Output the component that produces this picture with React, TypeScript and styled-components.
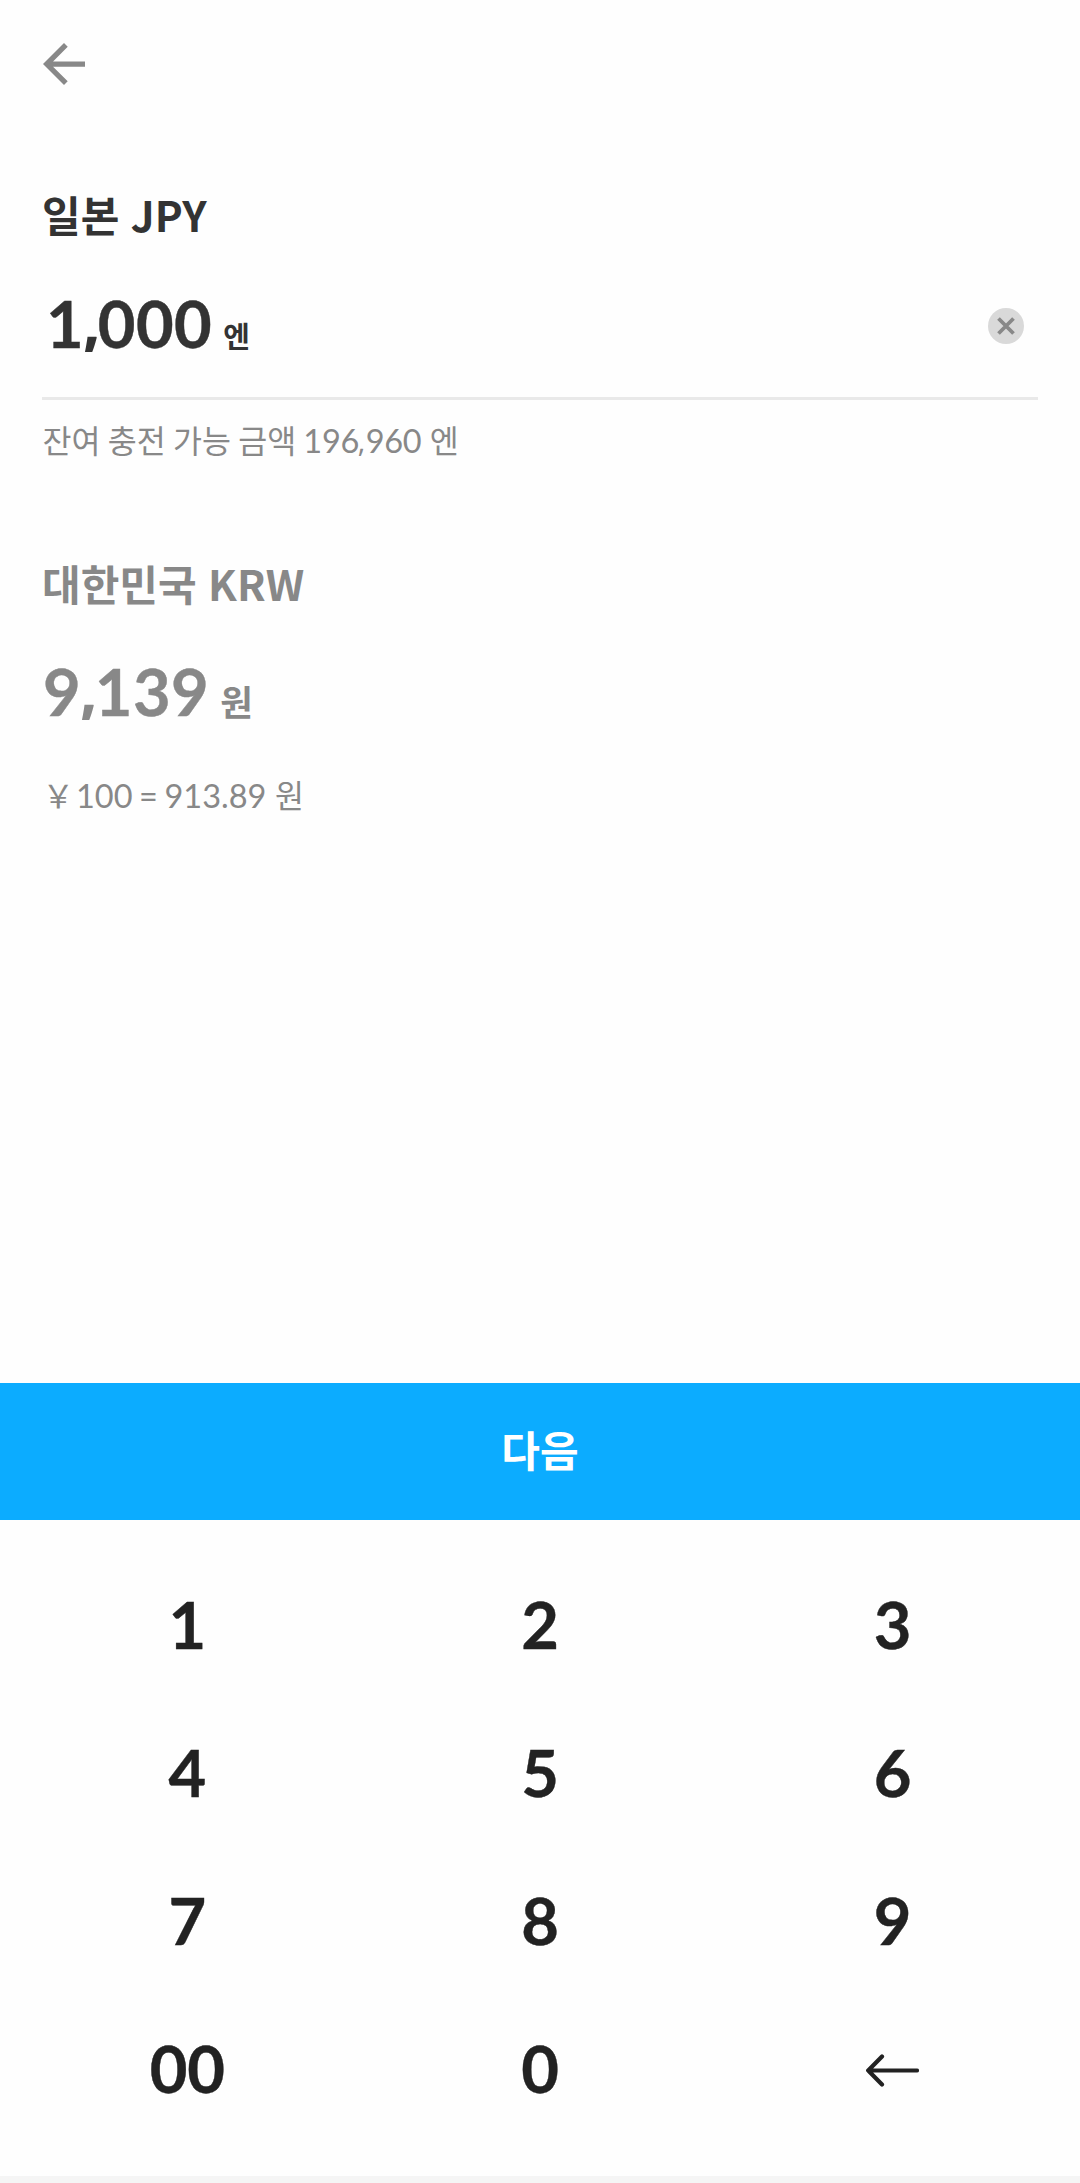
import React from "react";
import styled, { createGlobalStyle } from "styled-components";

const Global = createGlobalStyle`
  * { box-sizing: border-box; }
  body { margin: 0; background: #fefefe; }
`;

const Screen = styled.div`
  width: 1080px;
  height: 2183px;
  display: flex;
  flex-direction: column;
  background: #fefefe;
  font-family: Lato, "Noto Sans CJK KR", sans-serif;
  overflow: hidden;
`;

const Header = styled.header`
  height: 152px;
  flex: none;
  padding: 43px 0 0 43px;
`;

const IconButton = styled.button`
  display: flex;
  padding: 0;
  border: 0;
  background: none;
`;

const ClearButton = styled(IconButton)`
  margin-top: 32px;
`;

const Content = styled.main`
  height: 1231px;
  flex: none;
  padding: 0 42px;
`;

const Title = styled.h2<{ $color: string; $height: number }>`
  margin: 0;
  height: ${(p) => p.$height}px;
  font: 700 42px/${(p) => p.$height}px "Noto Sans CJK KR", sans-serif;
  word-spacing: 2px;
  color: ${(p) => p.$color};
`;

const AmountRow = styled.div`
  height: 124px;
  display: flex;
  align-items: flex-start;
  justify-content: space-between;
  border-bottom: 3px solid #e9e9e9;
  padding-right: 14px;
`;

const Amount = styled.div<{ $color: string; $height: number; $indent: number }>`
  height: ${(p) => p.$height}px;
  line-height: ${(p) => p.$height}px;
  padding-left: ${(p) => p.$indent}px;
  font-size: 65px;
  font-weight: 700;
  letter-spacing: 0.4px;
  color: ${(p) => p.$color};
  -webkit-text-stroke: 0.4px ${(p) => p.$color};
  white-space: nowrap;
`;

const Comma = styled.span`
  font: 800 53px/1 "Open Sans", sans-serif;
  vertical-align: 3px;
  margin: 0 -2.4px 0 -0.7px;
  -webkit-text-stroke: 0;
`;

const SmallComma = styled.span`
  font: 400 29px/1 "Open Sans", sans-serif;
  vertical-align: 1px;
  margin: 0 0.8px 0 -1.3px;
`;

const Unit = styled.span<{ $size: number }>`
  font-size: ${(p) => p.$size}px;
  line-height: 1;
  margin-left: 11px;
  -webkit-text-stroke: 0;
`;

const Note = styled.div<{ $height: number; $spacing: number; $wordSpacing: number }>`
  height: ${(p) => p.$height}px;
  padding-left: 0.5px;
  font-size: 32.5px;
  line-height: ${(p) => p.$height}px;
  letter-spacing: ${(p) => p.$spacing}px;
  word-spacing: ${(p) => p.$wordSpacing}px;
  color: #888;
  white-space: nowrap;
`;

const Hangul = styled.span<{ $before?: number; $after?: number }>`
  font-size: 31.5px;
  line-height: 1;
  letter-spacing: 0;
  margin-left: ${(p) => p.$before ?? 0}px;
  margin-right: ${(p) => p.$after ?? 0}px;
`;

const Converted = styled.section`
  margin-top: 81px;
`;

const Next = styled.button`
  height: 137px;
  flex: none;
  border: 0;
  background: #0cacff;
  color: #fff;
  font: 700 42px "Noto Sans CJK KR", sans-serif;
  padding: 0 0 6px;
`;

const Keypad = styled.div`
  height: 656px;
  flex: none;
  padding: 30px 11px 0;
  display: grid;
  grid-template-columns: repeat(3, 1fr);
  grid-auto-rows: 148px;
`;

const Key = styled.button`
  display: flex;
  align-items: center;
  justify-content: center;
  border: 0;
  padding: 0;
  background: none;
  color: #222;
  font: 700 65px Lato, sans-serif;
  -webkit-text-stroke: 0.4px #222;
`;

const DeleteKey = styled(Key)`
  padding-top: 4px;
`;

const Footer = styled.div`
  height: 7px;
  flex: none;
  background: #f5f5f5;
`;

export default function App() {
  return (
    <>
      <Global />
      <Screen>
        <Header>
          <IconButton aria-label="Back">
            <svg width="42" height="42" viewBox="4 4 16 16" fill="#888">
              <path d="M20 11H7.830l5.590-5.590L12 4l-8 8 8 8 1.410-1.410L7.830 13H20z" />
            </svg>
          </IconButton>
        </Header>
        <Content>
          <Title $height={124} $color="#333">일본 JPY</Title>
          <AmountRow>
            <Amount $height={94} $color="#333" $indent={4}>
              1<Comma>,</Comma>000<Unit $size={29}>엔</Unit>
            </Amount>
            <ClearButton aria-label="Clear">
              <svg width="36" height="36" viewBox="0 0 36 36">
                <circle cx="18" cy="18" r="18" fill="#d9d9d9" />
                <path d="M10.500 10.500l15 15M25.500 10.500l-15 15" stroke="#888" strokeWidth="3.800" />
              </svg>
            </ClearButton>
          </AmountRow>
          <Note $height={82} $spacing={-0.3} $wordSpacing={-0.8}>
            <Hangul>잔여 충전 가능 금액</Hangul> 196<SmallComma>,</SmallComma>960{" "}
            <Hangul $before={1}>엔</Hangul>
          </Note>
          <Converted>
            <Title $height={40} $color="#888">대한민국 KRW</Title>
            <Amount $height={176} $color="#888" $indent={1}>
              9<Comma>,</Comma>139<Unit $size={35.5}>원</Unit>
            </Amount>
            <Note $height={34} $spacing={0} $wordSpacing={-1.8}>
              <Hangul $after={2}>￥</Hangul>100 = 913.89 <Hangul $before={2}>원</Hangul>
            </Note>
          </Converted>
        </Content>
        <Next>다음</Next>
        <Keypad>
          {["1", "2", "3", "4", "5", "6", "7", "8", "9", "00", "0"].map((k) => (
            <Key key={k}>{k}</Key>
          ))}
          <DeleteKey aria-label="Delete">
            <svg width="53" height="33" viewBox="0 0 53 33" fill="none" stroke="#222" strokeWidth="4.200" strokeLinecap="round" strokeLinejoin="round">
              <path d="M51 16.500H2.200M16 2.500l-13.800 14 13.800 14" />
            </svg>
          </DeleteKey>
        </Keypad>
        <Footer />
      </Screen>
    </>
  );
}
